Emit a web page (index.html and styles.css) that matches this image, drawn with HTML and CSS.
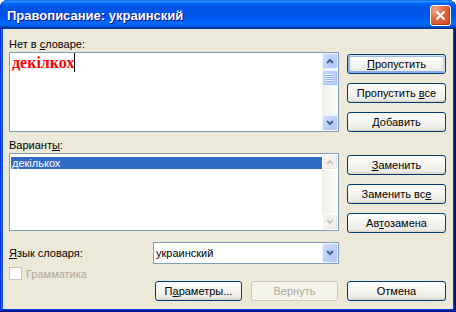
FILE: index.html
```html
<!DOCTYPE html>
<html lang="ru">
<head>
    <meta charset="UTF-8">
    <title>Правописание: украинский</title>
    <link rel="stylesheet" href="styles.css">
</head>
<body>
    <div class="window">
        <div class="title-bar">
            <span class="title-text">Правописание: украинский</span>
            <button class="close-btn" aria-label="Закрыть">
                <svg width="11" height="11" viewBox="0 0 11 11"><path d="M1.5 1.5 L9.5 9.5 M9.5 1.5 L1.5 9.5" stroke="#fff" stroke-width="2" fill="none"/></svg>
            </button>
        </div>

        <div class="window-body">
            <div class="field">
                <div class="caption">Нет в <u>с</u>ловаре:</div>
                <div class="edit-box">
                    <div class="edit-text"><span class="bad-word">декiлкох</span><span class="caret"></span></div>
                    <div class="scrollbar">
                        <span class="sb-btn"><svg width="8" height="6" viewBox="0 0 8 6"><path d="M1 5 L4 2 L7 5" /></svg></span>
                        <span class="sb-thumb"><span class="grip"></span></span>
                        <span class="sb-track"></span>
                        <span class="sb-btn"><svg width="8" height="6" viewBox="0 0 8 6"><path d="M1 1 L4 4 L7 1" /></svg></span>
                    </div>
                </div>
            </div>
            <div class="actions">
                <button class="btn default"><u>П</u>ропустить</button>
                <button class="btn">Пропустить <u>в</u>се</button>
                <button class="btn"><u>Д</u>обавить</button>
            </div>

            <div class="field field-list">
                <div class="caption">Вариант<u>ы</u>:</div>
                <div class="list-box">
                    <ul class="list-items">
                        <li class="selected">декількох</li>
                    </ul>
                    <div class="scrollbar disabled">
                        <span class="sb-btn"><svg width="8" height="6" viewBox="0 0 8 6"><path d="M1 5 L4 2 L7 5" /></svg></span>
                        <span class="sb-track"></span>
                        <span class="sb-btn"><svg width="8" height="6" viewBox="0 0 8 6"><path d="M1 1 L4 4 L7 1" /></svg></span>
                    </div>
                </div>
            </div>
            <div class="actions actions-list">
                <button class="btn"><u>З</u>аменить</button>
                <button class="btn">Заменить вс<u>е</u></button>
                <button class="btn">Ав<u>т</u>озамена</button>
            </div>

            <div class="lang-row">
                <span><u>Я</u>зык словаря:</span>
                <div class="combo">
                    <span class="combo-value">украинский</span>
                    <span class="sb-btn combo-btn"><svg width="8" height="6" viewBox="0 0 8 6"><path d="M1 1 L4 4 L7 1" /></svg></span>
                </div>
            </div>

            <div class="check-row">
                <span class="checkbox"></span>
                <span>Грамматика</span>
            </div>

            <div class="footer-buttons">
                <button class="btn btn-params">П<u>а</u>раметры...</button>
                <button class="btn btn-undo" disabled>Вернуть</button>
                <button class="btn btn-cancel">Отмена</button>
            </div>
        </div>
    </div>
</body>
</html>
```

FILE: styles.css
```css
* {
    margin: 0;
    padding: 0;
    box-sizing: border-box;
}

body {
    background: #fff;
    font-family: "Liberation Sans", Arial, sans-serif;
    font-size: 11px;
    color: #000;
}

u {
    text-decoration: underline;
    text-underline-offset: 1px;
}

/* Window frame */
.window {
    width: 456px;
    height: 312px;
    display: flex;
    flex-direction: column;
    background-color: #0831d9;
    border-radius: 8px 8px 0 0;
    box-shadow: inset -1px -1px #00138c, inset 1px 1px #0831d9, inset -2px -2px #001ea0, inset 2px 2px #166aee, inset -3px -3px #003bda, inset 3px 3px #0855dd;
}

.title-bar {
    height: 29px;
    flex: none;
    display: flex;
    justify-content: space-between;
    align-items: flex-start;
    padding: 0 5px 0 7px;
    border-radius: 8px 8px 0 0;
    background: linear-gradient(180deg, #0058ee 0%, #3593ff 4%, #288eff 6%, #127dff 8%, #036ffc 10%, #0262ee 14%, #0057e5 20%, #0054e3 24%, #0055eb 56%, #005bf5 66%, #026afe 76%, #0062ef 86%, #0052d6 92%, #0040ab 94%, #003092 100%);
}

.title-text {
    font-size: 13px;
    font-weight: bold;
    line-height: 16px;
    margin-top: 8px;
    color: #fff;
    text-shadow: 1px 1px #0f1089;
    letter-spacing: 0;
}

.close-btn {
    width: 21px;
    height: 21px;
    margin-top: 5px;
    display: flex;
    align-items: center;
    justify-content: center;
    border: 1px solid #fff;
    border-radius: 3px;
    background: radial-gradient(circle at 25% 20%, #f0a487 0%, #e2673f 45%, #cf4a20 100%);
    box-shadow: inset -1px -1px #b2391a;
}

.window-body {
    flex: 1;
    margin: 0 3px 3px;
    padding: 8px 0 0 6px;
    background: #ece9d8;
    display: grid;
    grid-template-columns: 330px 99px;
    column-gap: 8px;
    align-content: start;
}

.caption {
    height: 15px;
    line-height: 15px;
}

/* Edit box with scrollbar */
.edit-box,
.list-box {
    display: flex;
    border: 1px solid #7f9db9;
    background: #fff;
}

.edit-box {
    height: 80px;
}

.edit-text {
    flex: 1;
    padding: 1px 2px;
    line-height: 18px;
}

.bad-word {
    font-family: "Liberation Serif", "Times New Roman", serif;
    font-weight: bold;
    font-size: 16px;
    color: #ff0000;
    vertical-align: top;
}

.caret {
    display: inline-block;
    width: 1px;
    height: 19px;
    margin-top: -1px;
    background: #000;
    vertical-align: top;
}

.scrollbar {
    width: 16px;
    display: flex;
    flex-direction: column;
    background: linear-gradient(90deg, #eeede5 0%, #f7f6f1 40%, #fdfdfa 100%);
}

.sb-btn {
    width: 16px;
    height: 16px;
    flex: none;
    display: flex;
    align-items: center;
    justify-content: center;
    border: 1px solid #eef3fe;
    border-radius: 2px;
    background: linear-gradient(135deg, #cfdcfd 0%, #bccefa 60%, #aec3f6 100%);
    box-shadow: inset -1px -1px #b4c8f6;
}

.sb-btn path {
    fill: none;
    stroke: #4d6185;
    stroke-width: 2;
}

.sb-thumb {
    height: 16px;
    margin-top: 1px;
    display: flex;
    align-items: center;
    justify-content: center;
    border: 1px solid #eef3fe;
    border-radius: 2px;
    background: linear-gradient(90deg, #c4d4fc 0%, #b8cbf9 100%);
    box-shadow: inset -1px -1px #a8bff4;
}

.grip {
    width: 8px;
    height: 8px;
    background: repeating-linear-gradient(180deg, #eef4fe 0 1px, #8cb0f8 1px 2px);
}

.sb-track {
    flex: 1;
}

.scrollbar.disabled .sb-btn {
    border-color: #fff;
    background: #f3f1ec;
    box-shadow: inset -1px -1px #e6e4da;
}

.scrollbar.disabled .sb-btn path {
    stroke: #c9c7ba;
}

/* Right side buttons */
.actions {
    display: flex;
    flex-direction: column;
    gap: 9px;
    padding-top: 17px;
}

.btn {
    height: 20px;
    font: inherit;
    color: #000;
    border: 1px solid #003c74;
    border-radius: 3px;
    background: linear-gradient(180deg, #fff 0%, #ecebe6 86%, #d6d0c5 100%);
}

.btn.default {
    box-shadow: inset -1px 1px #cee7ff, inset 1px 2px #98b8ea, inset -2px 2px #bcd4f6, inset 1px -1px #89ade4, inset 2px -2px #89ade4;
}

.btn:disabled {
    border-color: #c9c7ba;
    background: #f5f4ea;
    color: #aca899;
}

/* Suggestions list */
.field-list,
.actions-list {
    margin-top: 6px;
}

.list-box {
    height: 78px;
}

.list-items {
    flex: 1;
    list-style: none;
    padding: 3px 0 0 1px;
}

.list-items li {
    height: 12px;
    line-height: 12px;
    padding-left: 1px;
}

.list-items li.selected {
    background: #316ac5;
    color: #fff;
}

/* Language row */
.lang-row {
    grid-column: 1;
    margin-top: 9px;
    display: flex;
    align-items: center;
    justify-content: space-between;
}

.combo {
    width: 186px;
    height: 22px;
    display: flex;
    border: 1px solid #7f9db9;
    background: #fff;
}

.combo-value {
    flex: 1;
    padding-left: 2px;
    line-height: 20px;
}

.combo-btn {
    height: 20px;
}

.check-row {
    grid-column: 1;
    margin-top: 3px;
    height: 13px;
    display: flex;
    align-items: center;
    gap: 4px;
    color: #aca899;
}

.checkbox {
    width: 13px;
    height: 13px;
    border: 1px solid #cac8bb;
    background: #fff;
}

.footer-buttons {
    grid-column: 1 / -1;
    margin-top: 1px;
    display: flex;
    justify-content: flex-end;
    gap: 9px;
    padding-right: 0;
}

.btn-params,
.btn-undo {
    width: 87px;
}

.btn-cancel {
    width: 99px;
}
```
